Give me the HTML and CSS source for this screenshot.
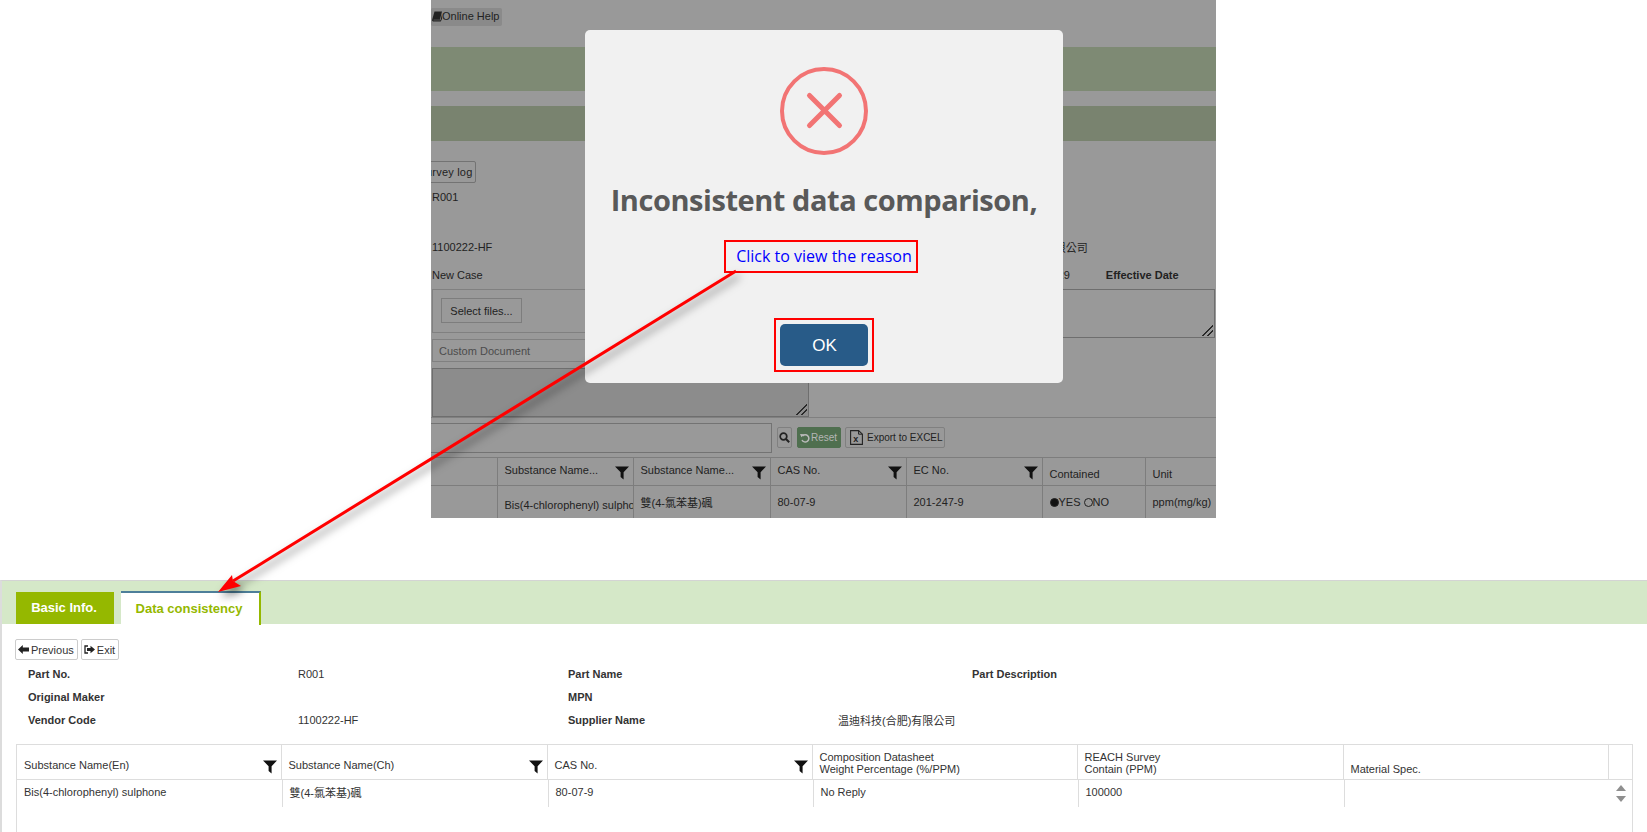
FILE: index.html
```html
<!DOCTYPE html>
<html lang="en">
<head>
    <meta charset="UTF-8">
    <meta name="viewport" content="width=device-width, initial-scale=1.0">
    <title>Inconsistent data comparison</title>
    <link rel="stylesheet" href="styles.css">
</head>
<body>
    <svg class="icon-defs" width="0" height="0">
        <symbol id="funnel" viewBox="0 0 14 14"><path d="M0 .5h14L8.600 6.200v7.300L5.600 11V6.200Z"/></symbol>
    </svg>

    <!-- top capture: form behind the alert -->
    <section class="shot">
        <div class="help-row">
            <span class="help-btn">
                <svg class="ico-book" viewBox="0 0 12 12"><path d="M3 0h9L9.500 10H2.200C1.600 10 1.400 10.600 2 10.600h8.200L12 3v6l-1.500 3H1.500C.4 12-.2 11 .2 10Z" fill="#222"/></svg>Online Help
            </span>
        </div>
        <div class="band band-one"></div>
        <div class="band band-two"></div>
        <button class="dim-btn survey-btn">Survey log</button>
        <div class="form-row r1"><span>R001</span></div>
        <div class="form-row r2">
            <span>1100222-HF</span>
            <span class="supplier-tail">温迪科技(合肥)有限公司</span>
        </div>
        <div class="form-row r3">
            <span>New Case</span>
            <span class="date-tail">2021/04/29</span>
            <span class="eff-label">Effective Date</span>
        </div>
        <div class="upload-area">
            <div class="upload-left">
                <div class="files-box"><span class="select-btn">Select files...</span></div>
                <div class="custom-doc">Custom Document</div>
                <div class="dark-area"><i class="grip"></i></div>
            </div>
            <div class="upload-right">
                <div class="right-area"><i class="grip"></i></div>
            </div>
        </div>
        <div class="toolbar">
            <div class="search-box"></div>
            <span class="tool-btn search-btn">
                <svg width="11" height="11" viewBox="0 0 11 11"><circle cx="4.500" cy="4.500" r="3.300" fill="none" stroke="#222" stroke-width="1.700"/><path d="M7 7l3.200 3.200" stroke="#222" stroke-width="2"/></svg>
            </span>
            <span class="tool-btn reset-btn">
                <svg width="10" height="10" viewBox="0 0 10 10"><path d="M2.500 3A3.600 3.600 0 1 1 2 7" fill="none" stroke="#bbb" stroke-width="1.500"/><path d="M0 1l4 .3-2.600 3Z" fill="#bbb"/></svg>Reset
            </span>
            <span class="tool-btn excel-btn">
                <svg width="13" height="15" viewBox="0 0 13 15"><path d="M.6.6h8l3.800 3.600v10.200H.6Z" fill="none" stroke="#222" stroke-width="1.100"/><path d="M8.600.6v3.600h3.800" fill="none" stroke="#222"/><text x="3.200" y="12" class="excel-x">x</text></svg>Export to EXCEL
            </span>
        </div>
        <table class="dim-table">
            <colgroup><col class="d1"><col class="d2"><col class="d3"><col class="d4"><col class="d5"><col class="d6"><col class="d7"></colgroup>
            <tr class="dim-head">
                <th></th>
                <th>Substance Name...<svg class="funnel"><use href="#funnel"/></svg></th>
                <th>Substance Name...<svg class="funnel"><use href="#funnel"/></svg></th>
                <th>CAS No.<svg class="funnel"><use href="#funnel"/></svg></th>
                <th>EC No.<svg class="funnel"><use href="#funnel"/></svg></th>
                <th class="low">Contained</th>
                <th class="low">Unit</th>
            </tr>
            <tr class="dim-row">
                <td></td>
                <td class="low">Bis(4-chlorophenyl) sulphone</td>
                <td>雙(4-氯苯基)碸</td>
                <td>80-07-9</td>
                <td>201-247-9</td>
                <td><i class="radio on"></i>YES <i class="radio"></i>NO</td>
                <td>ppm(mg/kg)</td>
            </tr>
        </table>

        <div class="overlay">
            <div class="alert">
                <svg class="alert-icon" width="88" height="88" viewBox="0 0 88 88">
                    <circle cx="44" cy="44" r="42" fill="none" stroke="#f27474" stroke-width="4"/>
                    <path d="M29.500 28.500L59.500 58.500M59.500 28.500L29.500 58.500" stroke="#f27474" stroke-width="5" stroke-linecap="round"/>
                </svg>
                <h2 class="alert-title">Inconsistent data comparison,</h2>
                <a class="alert-link" href="#">Click to view the reason</a>
                <div class="ok-mark"><button class="ok-btn">OK</button></div>
            </div>
        </div>
    </section>

    <!-- bottom capture: data consistency tab -->
    <section class="panel">
        <div class="tabs">
            <span class="tab tab-basic">Basic Info.</span>
            <span class="tab tab-data">Data consistency</span>
        </div>
        <div class="panel-body">
            <div class="actions">
                <span class="act-btn">
                    <svg width="11" height="9" viewBox="0 0 11 9"><path d="M0 4.500L4.800 0v2.600H11v3.800H4.800V9Z" fill="#222"/></svg>Previous
                </span>
                <span class="act-btn">
                    <svg width="11" height="9" viewBox="0 0 11 9"><path d="M4 1H1v7h3" fill="none" stroke="#222" stroke-width="1.300"/><path d="M11 4.500L6.500 .8v2.200H3v3h3.500v2.200Z" fill="#222"/></svg>Exit
                </span>
            </div>
            <div class="info">
                <b>Part No.</b><span>R001</span><b>Part Name</b><span></span><b>Part Description</b>
                <b>Original Maker</b><span></span><b>MPN</b><span></span><span></span>
                <b>Vendor Code</b><span>1100222-HF</span><b>Supplier Name</b><span>温迪科技(合肥)有限公司</span><span></span>
            </div>
            <div class="grid-wrap">
                <table class="grid-head">
                    <colgroup><col class="c1"><col class="c2"><col class="c3"><col class="c4"><col class="c5"><col class="c6"><col class="c7"></colgroup>
                    <tr>
                        <th class="mid">Substance Name(En)<svg class="funnel"><use href="#funnel"/></svg></th>
                        <th class="mid">Substance Name(Ch)<svg class="funnel"><use href="#funnel"/></svg></th>
                        <th class="mid">CAS No.<svg class="funnel"><use href="#funnel"/></svg></th>
                        <th>Composition Datasheet<br>Weight Percentage (%/PPM)</th>
                        <th>REACH Survey<br>Contain (PPM)</th>
                        <th>Material Spec.</th>
                        <th></th>
                    </tr>
                </table>
                <div class="grid-scroll">
                    <table class="grid-body">
                        <colgroup><col class="b1"><col class="b2"><col class="b3"><col class="b4"><col class="b5"><col class="b6"></colgroup>
                        <tr>
                            <td>Bis(4-chlorophenyl) sulphone</td>
                            <td>雙(4-氯苯基)碸</td>
                            <td>80-07-9</td>
                            <td>No Reply</td>
                            <td>100000</td>
                            <td></td>
                        </tr>
                    </table>
                    <div class="scroll-arrows"><i class="up"></i><i class="down"></i></div>
                </div>
            </div>
        </div>
    </section>

    <!-- red callout drawn over both captures -->
    <svg class="callout" width="1647" height="832" viewBox="0 0 1647 832">
        <path d="M736 271L233 581" stroke="#f00" stroke-width="3" fill="none"/>
        <path d="M218 592L232 575L233 581L241 586Z" fill="#f00"/>
    </svg>
</body>
</html>
```

FILE: styles.css
```css
* {
    box-sizing: border-box;
}

body {
    margin: 0;
    width: 1647px;
    height: 832px;
    overflow: hidden;
    position: relative;
    background: #fff;
    font-family: 'Liberation Sans', Arial, 'Noto Sans CJK TC', sans-serif;
    font-size: 11px;
    color: #333;
}

.icon-defs {
    position: absolute;
}

/* top capture */
.shot {
    position: relative;
    width: 785px;
    height: 518px;
    margin-left: 431px;
    background: #999;
    color: #222;
    overflow: hidden;
}

.help-row {
    height: 47px;
    padding-top: 8px;
}

.help-btn {
    display: inline-flex;
    align-items: center;
    width: 71px;
    height: 18px;
    padding: 0 0 2px 1px;
    background: #8a8a8a;
    border-radius: 2px;
    white-space: nowrap;
}

.ico-book {
    flex: none;
    width: 10px;
    height: 11px;
}

.band {
    background: #7e8a74;
}

.band-one {
    height: 44px;
    margin-bottom: 15px;
}

.band-two {
    height: 35px;
    background: #79836f;
}

.dim-btn {
    display: block;
    width: 69px;
    height: 22px;
    margin: 20px 0 0 -24px;
    padding: 0 0 0 8px;
    background: #999;
    border: 1px solid #737373;
    border-radius: 2px;
    font: 11px 'Liberation Sans', Arial, sans-serif;
    letter-spacing: 0.2px;
    color: #222;
}

.form-row {
    display: flex;
    align-items: center;
    height: 22px;
    padding-left: 1px;
}

.form-row.r1 {
    margin-top: 3px;
}

.form-row.r2 {
    margin-top: 28px;
}

.form-row.r3 {
    margin-top: 6px;
}

.supplier-tail {
    margin-left: 478px;
    white-space: nowrap;
}

.date-tail {
    margin-left: 532px;
}

.eff-label {
    margin-left: 36px;
    font-weight: bold;
}

.upload-area {
    display: flex;
    height: 128px;
    margin-top: 3px;
}

.upload-left {
    width: 378px;
    flex: none;
    padding-left: 1px;
}

.files-box {
    height: 44px;
    padding: 8px 0 0 8px;
    border: 1px solid #808080;
    border-right: 0;
}

.select-btn {
    display: inline-flex;
    align-items: center;
    justify-content: center;
    width: 81px;
    height: 25px;
    border: 1px solid #7d7d7d;
}

.custom-doc {
    display: flex;
    align-items: center;
    height: 23px;
    margin-top: 6px;
    padding-left: 6px;
    border: 1px solid #808080;
    color: #4c4c4c;
}

.dark-area {
    position: relative;
    height: 49px;
    margin-top: 6px;
    background: #8c8c8c;
    border: 1px solid #6e6e6e;
}

.upload-right {
    flex: 1;
    padding-right: 1px;
}

.right-area {
    position: relative;
    height: 49px;
    border: 1px solid #6e6e6e;
}

.grip {
    position: absolute;
    right: 1px;
    bottom: 1px;
    width: 11px;
    height: 11px;
    background: linear-gradient(135deg, transparent 46%, #2a2a2a 46%, #2a2a2a 56%, transparent 56%, transparent 70%, #2a2a2a 70%, #2a2a2a 80%, transparent 80%);
}

.toolbar {
    display: flex;
    align-items: center;
    height: 40px;
    border-top: 1px solid #808080;
}

.search-box {
    width: 343px;
    height: 30px;
    margin-left: -2px;
    border: 1px solid #737373;
    flex: none;
}

.tool-btn {
    display: inline-flex;
    align-items: center;
    height: 21px;
    border: 1px solid #808080;
    border-radius: 2px;
    font-size: 10px;
    white-space: nowrap;
}

.search-btn {
    justify-content: center;
    width: 15px;
    margin-left: 5px;
}

.reset-btn {
    gap: 1px;
    width: 44px;
    margin-left: 5px;
    padding-left: 2px;
    background: #4f6f4f;
    border-color: #4f6f4f;
    color: #b5b5b5;
}

.excel-btn {
    gap: 4px;
    width: 100px;
    margin-left: 4px;
    padding-left: 4px;
}

.excel-x {
    font-size: 9px;
    font-weight: bold;
    fill: #222;
}

.dim-table {
    width: 785px;
    table-layout: fixed;
    border-collapse: collapse;
}

.d1 { width: 66px; }
.d2 { width: 136px; }
.d3 { width: 137px; }
.d4 { width: 136px; }
.d5 { width: 136px; }
.d6 { width: 103px; }
.d7 { width: 71px; }

.dim-table th,
.dim-table td {
    position: relative;
    padding: 0 0 0 7px;
    border: 1px solid #7d7d7d;
    border-top: 0;
    font-weight: normal;
    text-align: left;
    white-space: nowrap;
    overflow: hidden;
}

.dim-table th:first-child,
.dim-table td:first-child {
    border-left: 0;
}

.dim-table tr > :last-child {
    border-right: 0;
}

.dim-head th {
    height: 28px;
    padding-bottom: 3px;
    border-top: 1px solid #7d7d7d;
}

.dim-head th.low {
    padding: 5px 0 0 7px;
}

.dim-row td {
    height: 33px;
    border-bottom: 0;
}

.dim-row td.low {
    padding: 5px 0 0 7px;
}

.radio {
    display: inline-block;
    width: 9px;
    height: 9px;
    border: 1px solid #222;
    border-radius: 50%;
    vertical-align: -1px;
}

.radio.on {
    background: #111;
}

.funnel {
    position: absolute;
    right: 4px;
    top: 8px;
    width: 14px;
    height: 14px;
    fill: #111;
}

/* alert */
.overlay {
    position: absolute;
    top: 30px;
    left: 154px;
}

.alert {
    display: flex;
    flex-direction: column;
    align-items: center;
    width: 478px;
    height: 353px;
    padding-top: 37px;
    background: #f1f1f1;
    border-radius: 5px;
}

.alert-icon {
    flex: none;
}

.alert-title {
    margin: 25px 0 0;
    font: 700 29px/40px 'Open Sans', sans-serif;
    letter-spacing: -0.45px;
    color: #595959;
    white-space: nowrap;
}

.alert-link {
    display: flex;
    align-items: center;
    justify-content: center;
    width: 194px;
    height: 33px;
    margin: 20px 6px 0 0;
    padding: 0 0 2px 6px;
    border: 2px solid #f00;
    font: 16px 'Open Sans', sans-serif;
    color: #00f;
    text-decoration: none;
    white-space: nowrap;
}

.ok-mark {
    display: flex;
    align-items: center;
    justify-content: center;
    width: 100px;
    height: 54px;
    margin-top: 45px;
    border: 2px solid #f00;
}

.ok-btn {
    width: 88px;
    height: 42px;
    padding: 2px 0 0 1px;
    background: #285b88;
    border: 0;
    border-radius: 5px;
    font: 17px 'Liberation Sans', Arial, sans-serif;
    color: #fff;
}

/* bottom capture */
.panel {
    height: 252px;
    margin-top: 62px;
    border-top: 1px solid #d4d4d4;
    border-left: 2px solid #dcdcdc;
}

.tabs {
    display: flex;
    align-items: flex-end;
    height: 43px;
    padding-left: 14px;
    background: #d5e8c8;
}

.tab {
    display: flex;
    align-items: center;
    justify-content: center;
    font-weight: bold;
}

.tab-basic {
    width: 98px;
    height: 32px;
    padding: 0 2px 2px 0;
    background: #95b800;
    font-size: 13px;
    color: #fff;
}

.tab-data {
    width: 140px;
    height: 34px;
    margin: 0 0 -1px 7px;
    padding: 0 2px 2px 0;
    background: #fff;
    border-top: 2px solid #4d7f9a;
    border-right: 2px solid #95b800;
    font-size: 13px;
    color: #95b800;
}

.panel-body {
    padding: 15px 0 0 13px;
}

.actions {
    display: flex;
    gap: 3px;
}

.act-btn {
    display: inline-flex;
    align-items: center;
    gap: 2px;
    height: 21px;
    padding: 0 3px 0 2px;
    border: 1px solid #ccc;
    border-radius: 2px;
    color: #333;
    white-space: nowrap;
}

.info {
    display: grid;
    grid-template-columns: 270px 270px 270px 134px 1fr;
    grid-auto-rows: 23px;
    align-items: center;
    margin-top: 2px;
    padding-left: 13px;
}

.grid-wrap {
    margin-top: 13px;
    margin-left: 1px;
    width: 1617px;
    height: 88px;
    border-left: 1px solid #ddd;
    border-right: 1px solid #ddd;
}

.grid-head,
.grid-body {
    table-layout: fixed;
    border-collapse: collapse;
}

.grid-head {
    width: 1615px;
    border-top: 1px solid #ddd;
}

.c1 { width: 264px; }
.c2 { width: 266px; }
.c3 { width: 265px; }
.c4 { width: 265px; }
.c5 { width: 266px; }
.c6 { width: 265px; }
.c7 { width: 24px; }

.grid-head th {
    position: relative;
    height: 35px;
    padding: 4px 0 4px 7px;
    border-right: 1px solid #ddd;
    border-bottom: 1px solid #ddd;
    font-size: 11px;
    line-height: 12px;
    font-weight: normal;
    text-align: left;
    vertical-align: bottom;
    color: #333;
}

.grid-head th:last-child {
    border-right: 0;
}

.grid-head th.mid {
    padding-bottom: 8px;
}

.grid-head .funnel {
    top: 15px;
}

.grid-scroll {
    position: relative;
}

.grid-body {
    width: 1591px;
}

.b1 { width: 265px; }
.b2 { width: 266px; }
.b3 { width: 265px; }
.b4 { width: 265px; }
.b5 { width: 266px; }
.b6 { width: 264px; }

.grid-body td {
    height: 27px;
    padding: 0 0 3px 7px;
    border-right: 1px solid #ddd;
    font-size: 11px;
    color: #333;
}

.grid-body td:last-child {
    border-right: 0;
}

.scroll-arrows {
    position: absolute;
    top: 5px;
    right: 6px;
    display: flex;
    flex-direction: column;
    gap: 5px;
}

.scroll-arrows i {
    width: 0;
    height: 0;
    border-left: 5px solid transparent;
    border-right: 5px solid transparent;
}

.scroll-arrows .up {
    border-bottom: 6px solid #8f8f8f;
}

.scroll-arrows .down {
    border-top: 6px solid #8f8f8f;
}

/* callout */
.callout {
    position: absolute;
    top: 0;
    left: 0;
    pointer-events: none;
    filter: drop-shadow(3px 5px 4px rgba(0, 0, 0, 0.5));
}
```
